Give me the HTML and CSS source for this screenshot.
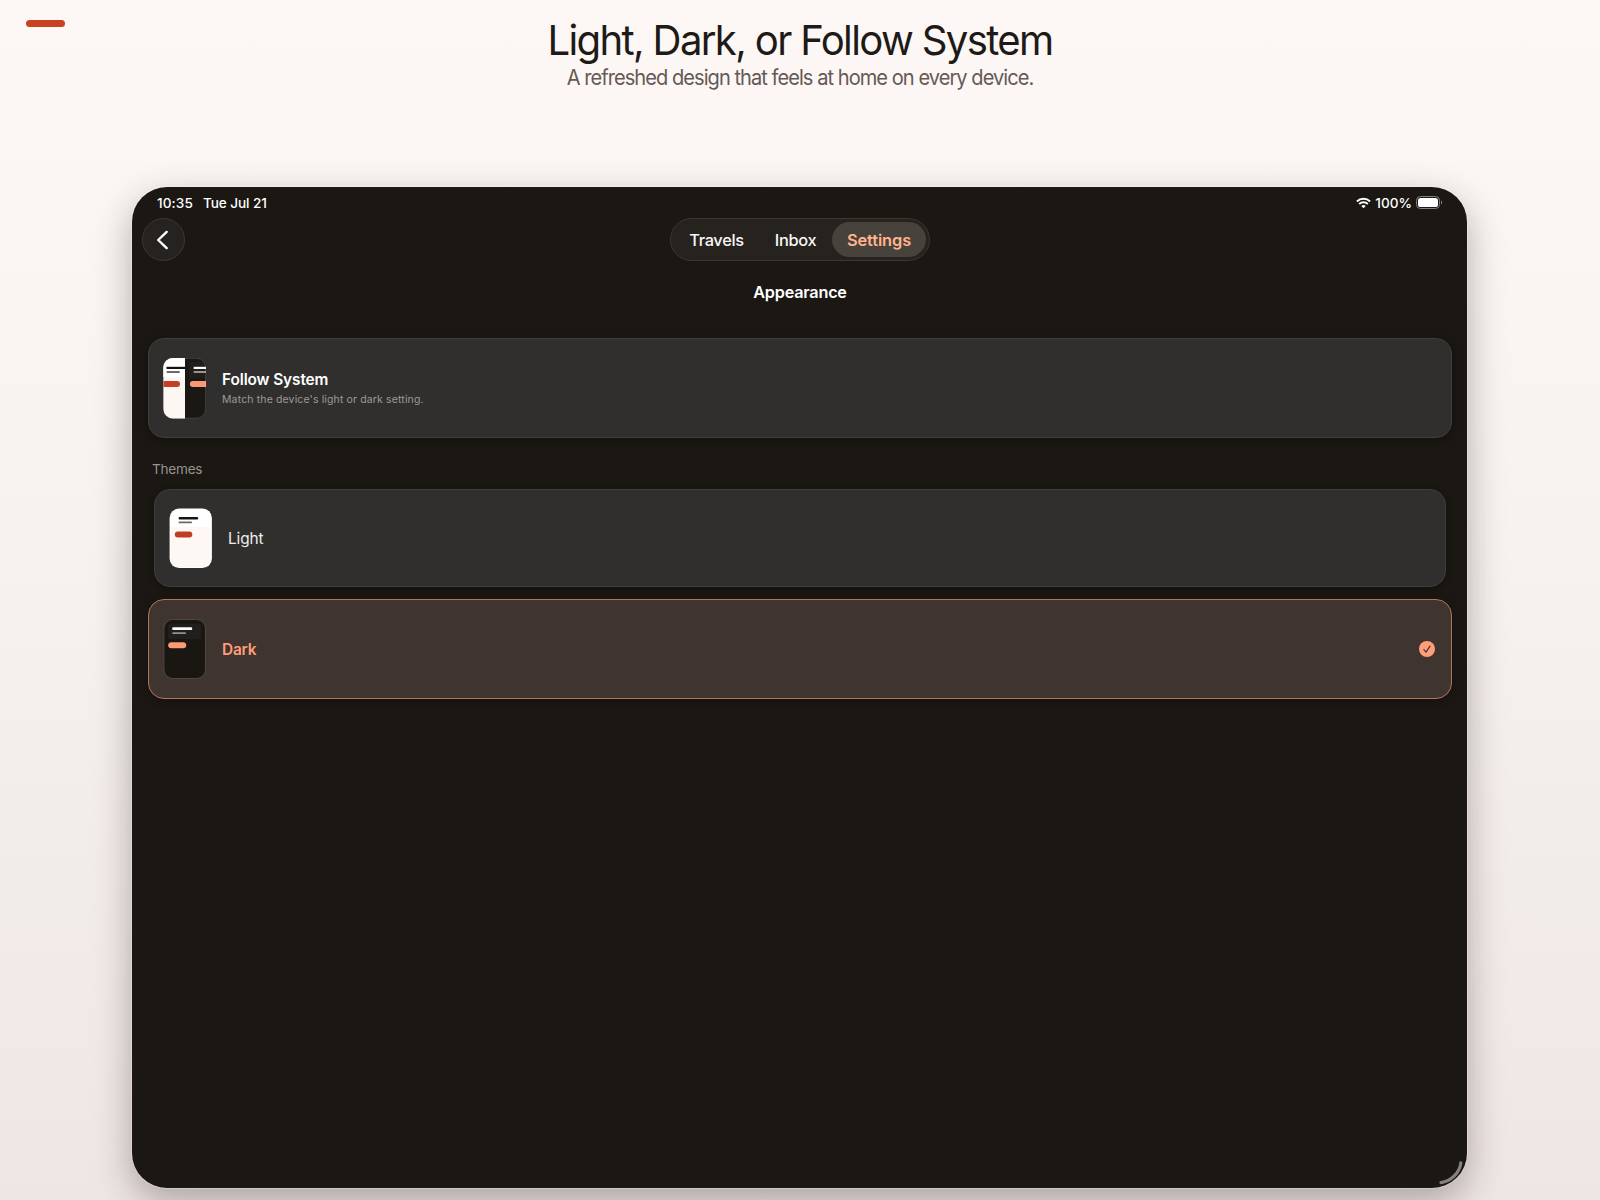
FILE: index.html
```html
<!DOCTYPE html>
<html lang="en">
<head>
<meta charset="utf-8">
<title>Appearance</title>
<link rel="stylesheet" href="styles.css">
</head>
<body>
<span class="accent"></span>
<header class="hero">
  <h1 class="hero-title">Light, Dark, or Follow System</h1>
  <p class="hero-sub">A refreshed design that feels at home on every device.</p>
</header>
<main class="device">
  <div class="status">
    <span class="time">10:35</span>
    <span class="date">Tue Jul 21</span>
    <svg class="wifi" width="15" height="12" viewBox="0 0 15 12" fill="none" stroke="#fff" stroke-width="1.9"><path d="M.9 4.5a9.4 9.4 0 0 1 13.2 0"/><path d="M3.2 7a6.1 6.1 0 0 1 8.6 0"/><path d="M7.5 11.2 5.3 9a3.1 3.1 0 0 1 4.4 0z" fill="#fff" stroke="none"/></svg>
    <span class="percent">100%</span>
    <svg class="battery" width="27" height="13" viewBox="0 0 27 13"><rect x=".5" y=".5" width="23" height="12" rx="3.9" fill="none" stroke="#85827f"/><rect x="2" y="2" width="20" height="9" rx="2.6" fill="#fff"/><path d="M25 4.6v3.8c1.5-.6 1.5-3.2 0-3.8z" fill="#85827f"/></svg>
  </div>
  <div class="bar">
    <button class="back" aria-label="Back"><svg width="43" height="43" viewBox="0 0 43 43" fill="none" stroke="#fff" stroke-width="2.4" stroke-linecap="round" stroke-linejoin="round"><path d="M23.7 12.9 15.2 21l8.5 8.1"/></svg></button>
    <nav class="tabs">
      <a class="tab travels">Travels</a>
      <a class="tab inbox">Inbox</a>
      <a class="tab selected">Settings</a>
    </nav>
  </div>
  <h2 class="page-title">Appearance</h2>
  <section class="card">
    <svg class="thumb" width="43" height="61" viewBox="0 0 43 61">
      <clipPath id="round"><rect x=".4" width="42.6" height="60.5" rx="9.5"/></clipPath>
      <g clip-path="url(#round)">
        <rect width="22" height="61" fill="#fcf7f3"/><rect width="22" height="19" fill="#fff"/>
        <rect x="22" width="21" height="61" fill="#1b1713"/><rect x="26" y="4" width="17" height="16" fill="#211d1b"/>
        <rect x="3.5" y="8.8" width="18.5" height="2.2" fill="#161412"/><rect x="3.5" y="13.1" width="13.4" height="1.8" rx=".9" fill="#6f6865"/>
        <rect x="-5" y="23" width="22" height="6" rx="3" fill="#c34122"/>
        <rect x="30.7" y="8.8" width="14" height="2.2" fill="#fff"/><rect x="30.7" y="13.1" width="14" height="1.8" fill="#aaa49f"/>
        <rect x="26.9" y="23" width="22" height="6" rx="3" fill="#ff9672"/>
      </g>
      <rect x=".8" y=".4" width="41.8" height="59.8" rx="9" fill="none" stroke="#fff" stroke-opacity=".16"/>
    </svg>
    <div class="labels">
      <span class="name strong">Follow System</span>
      <span class="detail">Match the device's light or dark setting.</span>
    </div>
  </section>
  <h3 class="group">Themes</h3>
  <section class="card inset">
    <svg class="thumb" width="43" height="60" viewBox="0 0 43 60">
      <rect x=".6" y=".4" width="42.3" height="59.6" rx="9.5" fill="#fff"/><path d="M1.6 19h40.2v31.5a8.5 8.5 0 0 1-8.5 8.5H10.1a8.5 8.5 0 0 1-8.5-8.5z" fill="#fdf8f4"/>
      <rect x="9.6" y="9" width="19.5" height="2.5" rx="1" fill="#161412"/><rect x="9.6" y="13.5" width="13.4" height="1.8" rx=".9" fill="#6f6865"/>
      <rect x="5.8" y="23.4" width="17.5" height="6" rx="3" fill="#bd3f20"/>
    </svg>
    <span class="name">Light</span>
  </section>
  <section class="card active">
    <svg class="thumb" width="43" height="60" viewBox="0 0 43 60">
      <rect x=".9" y=".5" width="41.6" height="59" rx="9" fill="#1a1612" stroke="#514641"/>
      <rect x="5" y="5" width="33" height="15" rx="1" fill="#211e1c"/>
      <rect x="9.2" y="8.3" width="20" height="2.7" rx="1" fill="#fff"/><rect x="9.2" y="13.2" width="13.8" height="1.9" rx=".9" fill="#96908a"/>
      <rect x="5.2" y="23.2" width="18" height="6" rx="3" fill="#ff9973"/>
    </svg>
    <span class="name">Dark</span>
    <svg class="check" width="16" height="16" viewBox="0 0 16 16"><circle cx="8" cy="8" r="8" fill="#ff9e78"/><path d="m4.9 8.6 2.1 2.5 4-6" fill="none" stroke="#40332e" stroke-width="1.2" stroke-linecap="round" stroke-linejoin="round"/></svg>
  </section>
  <svg class="grip" width="26" height="26" viewBox="0 0 26 26" fill="none" stroke="#85817e" stroke-width="3.2" stroke-linecap="round"><path d="M22.8 2.8C21.8 12.5 13 21.5 3 22.6"/></svg>
</main>
</body>
</html>
```
FILE: styles.css
```css
* { box-sizing: border-box; margin: 0; padding: 0; }
body {
  position: relative;
  height: 1200px;
  overflow: hidden;
  font-family: Inter, "Liberation Sans", sans-serif;
  background: linear-gradient(#fdf8f5, #f6f2ef 45%, #eee6e3);
}
.accent {
  position: absolute;
  left: 25.5px;
  top: 19.5px;
  width: 39px;
  height: 7.5px;
  border-radius: 4px;
  background: #c84120;
}
.hero { height: 187px; padding-top: 15px; text-align: center; white-space: nowrap; }
.hero-title { font-size: 41.6px; line-height: 50px; font-weight: 400; letter-spacing: -1.72px; color: #1e1a17; transform: scaleX(.965); }
.hero-sub { font-size: 21px; line-height: 26px; letter-spacing: -1px; color: #655a56; transform: scaleX(.955); }
.device {
  position: relative;
  width: 1335px;
  height: 1001px;
  margin-left: 132px;
  padding: 0 15px 0 16px;
  border-radius: 35px;
  background: #1b1713;
  box-shadow: 0 0 0 1px rgba(255, 255, 255, .3), 0 13px 36px rgba(45, 30, 25, .34);
}
.status { display: flex; align-items: center; height: 31px; padding: 0 9px; color: #fff; font-size: 13.6px; font-weight: 500; }
.time { width: 46px; letter-spacing: .1px; }
.date { flex: 1; letter-spacing: -.1px; }
.wifi { margin-right: 4px; }
.percent { margin-right: 4px; }
.bar { display: grid; grid-template-columns: 1fr auto 1fr; height: 43px; margin: 0 -6px; }
.back { width: 43px; height: 43px; border: 1px solid #3b3733; border-radius: 50%; background: #26221f; display: grid; place-items: center; }
.tabs { display: flex; width: 260px; height: 43px; padding: 3px; border: 1px solid #3b3733; border-radius: 22px; background: #26221e; }
.tab { display: grid; place-items: center; color: #f8f7f6; font-size: 16.4px; font-weight: 500; letter-spacing: -.35px; }
.travels { width: 87px; padding-right: 2px; }
.inbox { width: 71px; padding-right: 2px; }
.selected { width: 94px; border-radius: 18px; background: #47423c; color: #ffb38d; font-weight: 600; letter-spacing: -.1px; }
.page-title { padding-top: 21px; height: 77px; text-align: center; color: #fff; font-size: 16.2px; line-height: 20px; font-weight: 600; letter-spacing: -.2px; }
.card {
  display: flex;
  align-items: center;
  gap: 16px;
  height: 100px;
  padding: 0 14px;
  border: 1px solid #403d3b;
  border-radius: 16px;
  background: #312f2e;
  box-shadow: 0 2px 8px rgba(0, 0, 0, .25);
}
.labels { display: flex; flex-direction: column; gap: 1px; padding-top: 2px; }
.name { color: #efedec; font-size: 15.4px; line-height: 20px; letter-spacing: -.1px; }
.strong { color: #fff; font-weight: 600; }
.detail { color: #9c9996; font-size: 10.5px; line-height: 18px; letter-spacing: .14px; }
.group { height: 51px; padding: 22px 4px 0; color: #969390; font-size: 13.6px; line-height: 18px; font-weight: 400; letter-spacing: -.25px; }
.inset { height: 98px; margin: 0 6px 12px; }
.inset .name { padding-top: 1px; }
.active { border-color: #b37458; background: #403430; }
.active .name { flex: 1; padding-top: 1px; color: #ff9e78; font-weight: 600; letter-spacing: -.2px; }
.check { margin-right: 2px; }
.grip { position: absolute; right: 3px; bottom: 2px; }
```
